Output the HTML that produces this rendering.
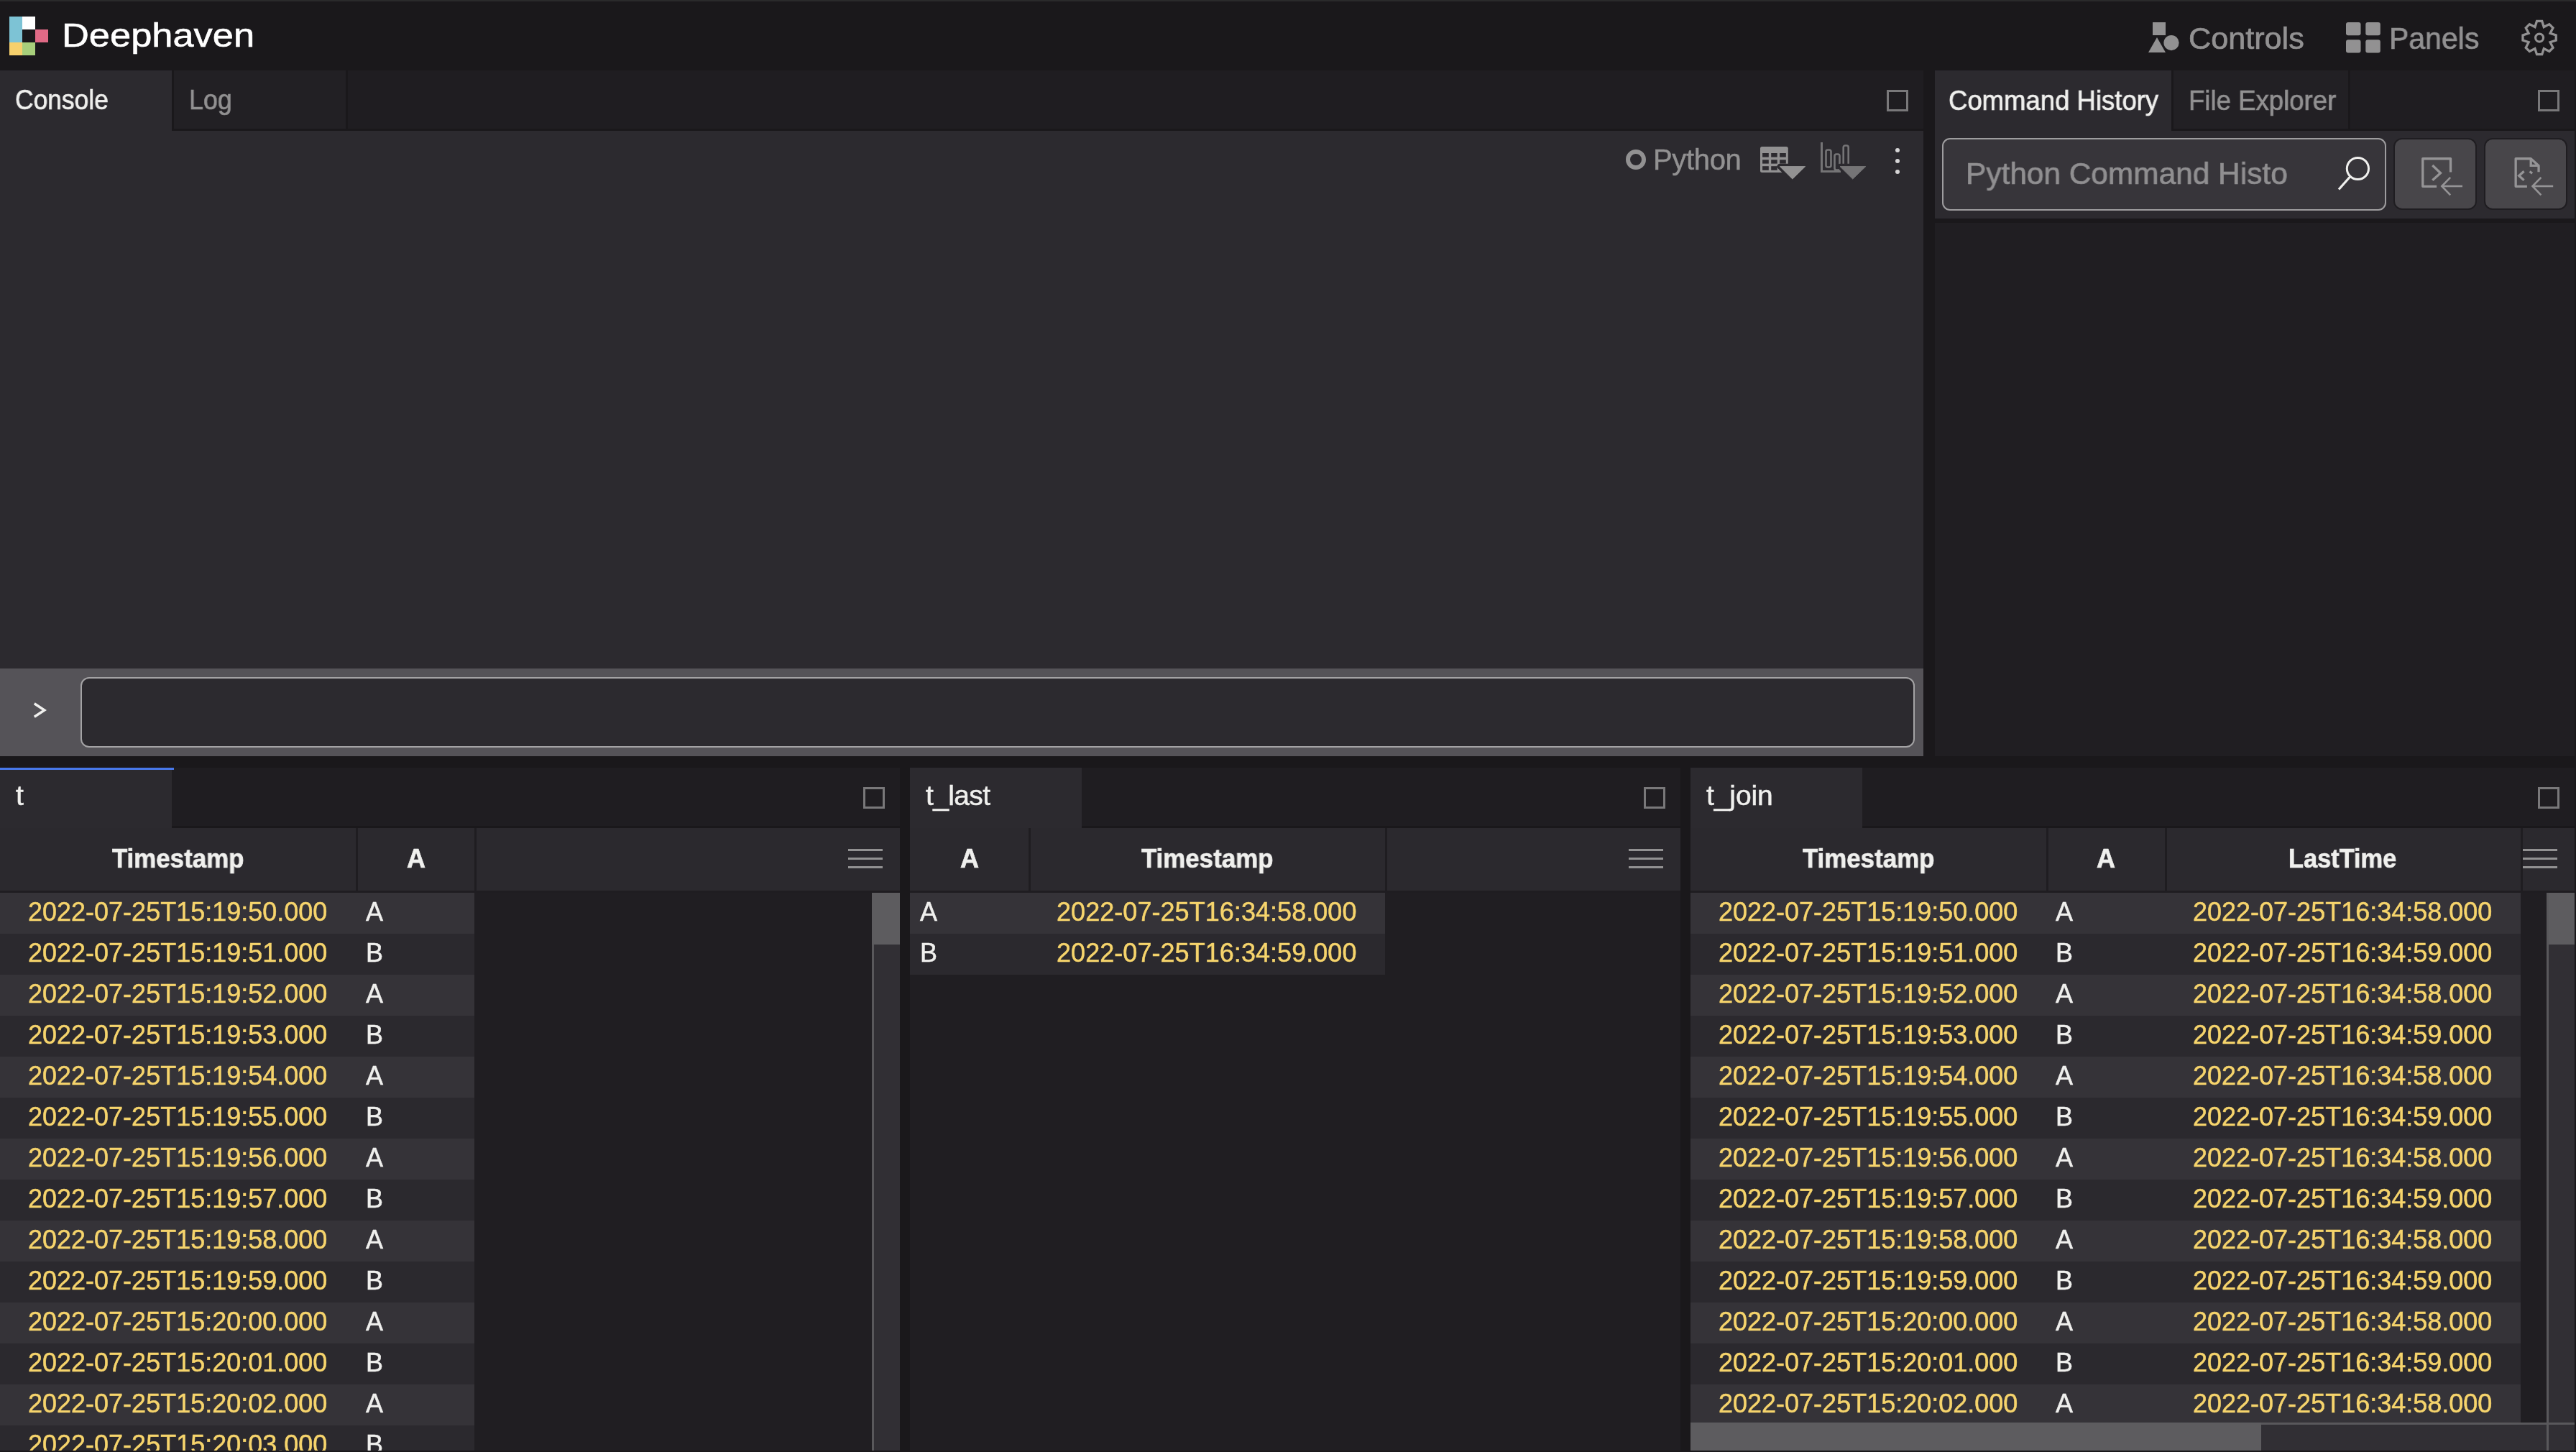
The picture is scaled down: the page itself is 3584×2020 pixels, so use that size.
<!DOCTYPE html>
<html><head><meta charset="utf-8"><title>Deephaven</title><style>
html,body{margin:0;padding:0;width:3584px;height:2020px;overflow:hidden;background:#1a181b;font-family:"Liberation Sans",sans-serif;}
.a{position:absolute;box-sizing:border-box;}
.t{position:absolute;white-space:pre;line-height:1;will-change:transform;}
svg{position:absolute;overflow:visible;}
</style></head><body>
<div class="a" style="left:0px;top:0px;width:3584px;height:2px;background:#2a2a2b;"></div>
<div class="a" style="left:0px;top:2px;width:3584px;height:96px;background:#1a181b;"></div>
<div class="a" style="left:13px;top:23px;width:18px;height:36px;background:#7dc3d5;"></div>
<div class="a" style="left:31px;top:23px;width:18px;height:18px;background:#ffffff;"></div>
<div class="a" style="left:49px;top:41px;width:18px;height:18px;background:#e06a86;"></div>
<div class="a" style="left:13px;top:59px;width:18px;height:18px;background:#f6d06c;"></div>
<div class="a" style="left:31px;top:59px;width:18px;height:18px;background:#a7cf7b;"></div>
<div class="t" style="left:85.5px;top:25.1px;font-size:47px;color:#ffffff;font-weight:400;transform:scaleX(1.1150);transform-origin:0 0;-webkit-text-stroke:0.6px #ffffff;">Deephaven</div>
<svg style="left:2989px;top:31px" width="44" height="43" viewBox="0 0 44 43"><rect x="6" y="0" width="18" height="18" fill="#929192"/><polygon points="0,42 12,21 24,42" fill="#929192"/><circle cx="32" cy="28.6" r="10.6" fill="#929192"/></svg>
<div class="t" style="left:3044.6px;top:32.5px;font-size:42px;color:#929192;font-weight:400;transform:scaleX(1.0280);transform-origin:0 0;-webkit-text-stroke:0.7px currentColor;">Controls</div>
<svg style="left:3264px;top:30.6px" width="48" height="43" viewBox="0 0 48 43"><rect x="0" y="0" width="20.5" height="18.2" rx="3" fill="#929192"/><rect x="27.3" y="0" width="20.5" height="18.2" rx="3" fill="#929192"/><rect x="0" y="24.2" width="20.5" height="18.2" rx="3" fill="#929192"/><rect x="27.3" y="24.2" width="20.5" height="18.2" rx="3" fill="#929192"/></svg>
<div class="t" style="left:3324.1px;top:32.5px;font-size:42px;color:#929192;font-weight:400;transform:scaleX(0.9760);transform-origin:0 0;-webkit-text-stroke:0.7px currentColor;">Panels</div>
<svg style="left:3508px;top:27.4px" width="51" height="51" viewBox="0 0 51 51"><polygon points="21.49,2.43 28.71,2.43 31.30,10.58 38.89,6.65 44.00,11.76 40.07,19.35 48.22,21.94 48.22,29.16 40.07,31.75 44.00,39.34 38.89,44.45 31.30,40.52 28.71,48.67 21.49,48.67 18.90,40.52 11.31,44.45 6.20,39.34 10.13,31.75 1.98,29.16 1.98,21.94 10.13,19.35 6.20,11.76 11.31,6.65 18.90,10.58" fill="none" stroke="#929192" stroke-width="3.3" stroke-linejoin="miter" stroke-miterlimit="10"/><circle cx="25.1" cy="25.55" r="5.5" fill="none" stroke="#929192" stroke-width="3.2"/></svg>
<div class="a" style="left:0px;top:98px;width:2676px;height:84px;background:#1f1d21;"></div>
<div class="a" style="left:0px;top:179px;width:2676px;height:3px;background:#1a181b;"></div>
<div class="a" style="left:0px;top:98px;width:239px;height:84px;background:#2c2a2f;"></div>
<div class="a" style="left:239px;top:98px;width:245px;height:84px;background:#1a181b;"></div>
<div class="a" style="left:242px;top:98px;width:239px;height:81px;background:#222024;"></div>
<div class="t" style="left:20.6px;top:119.3px;font-size:39px;color:#f0f0ee;font-weight:400;transform:scaleX(0.9070);transform-origin:0 0;-webkit-text-stroke:0.7px currentColor;">Console</div>
<div class="t" style="left:262.7px;top:119.3px;font-size:39px;color:#929192;font-weight:400;transform:scaleX(0.9170);transform-origin:0 0;-webkit-text-stroke:0.7px currentColor;">Log</div>
<div class="a" style="left:2625px;top:125px;width:30px;height:30px;border:3px solid #79787a;"></div>
<div class="a" style="left:0px;top:182px;width:2676px;height:748px;background:#2c2a2f;"></div>
<div class="a" style="left:2262px;top:208px;width:28.4px;height:28.4px;border-radius:50%;border:6.2px solid #929192;"></div>
<div class="t" style="left:2300.3px;top:202.3px;font-size:40px;color:#929192;font-weight:400;letter-spacing:-0.35px;-webkit-text-stroke:0.5px currentColor;">Python</div>
<svg style="left:2449px;top:204px" width="64" height="46" viewBox="0 0 64 46">
<rect x="0" y="0" width="38.8" height="36" rx="2.5" fill="#929192"/>
<g fill="#2c2a2f">
<rect x="3.1" y="9" width="8.7" height="5.6"/><rect x="15.2" y="9" width="8.5" height="5.6"/><rect x="27.1" y="9" width="8.7" height="5.6"/>
<rect x="3.1" y="18.3" width="8.7" height="5.3"/><rect x="15.2" y="18.3" width="8.5" height="5.3"/><rect x="27.1" y="18.3" width="8.7" height="5.3"/>
<rect x="3.1" y="27.2" width="8.7" height="5.6"/><rect x="15.2" y="27.2" width="8.5" height="5.6"/><rect x="27.1" y="27.2" width="8.7" height="5.6"/>
</g>
<polygon points="27.3,27.6 62.7,27.6 44.8,45" fill="#2c2a2f" stroke="#2c2a2f" stroke-width="7.5" stroke-linejoin="round"/>
<polygon points="27.3,27.6 62.7,27.6 44.8,45" fill="#929192" stroke="#929192" stroke-width="1" stroke-linejoin="round"/>
</svg>
<svg style="left:2533px;top:198px" width="64" height="52" viewBox="0 0 64 52">
<rect x="0" y="0" width="3" height="42" fill="#757476"/><rect x="0" y="39" width="28" height="3" fill="#757476"/>
<rect x="7.5" y="10.5" width="7" height="24" rx="2.5" fill="none" stroke="#757476" stroke-width="2.6"/>
<rect x="19.5" y="16.5" width="7" height="22" rx="2.5" fill="none" stroke="#757476" stroke-width="2.6"/>
<rect x="31.7" y="4.5" width="7" height="30" rx="2.5" fill="none" stroke="#757476" stroke-width="2.6"/>
<polygon points="27,33.6 62.8,33.6 44.7,51" fill="#2c2a2f" stroke="#2c2a2f" stroke-width="7.5" stroke-linejoin="round"/>
<polygon points="27,33.6 62.8,33.6 44.7,51" fill="#757476" stroke="#757476" stroke-width="1" stroke-linejoin="round"/>
</svg>
<div class="a" style="left:2637px;top:206px;width:6.4px;height:6.4px;border-radius:50%;background:#d6d5d6;"></div>
<div class="a" style="left:2637px;top:221px;width:6.4px;height:6.4px;border-radius:50%;background:#d6d5d6;"></div>
<div class="a" style="left:2637px;top:236px;width:6.4px;height:6.4px;border-radius:50%;background:#d6d5d6;"></div>
<div class="a" style="left:0px;top:930px;width:2676px;height:122px;background:#555358;"></div>
<svg style="left:46px;top:977px" width="20" height="24" viewBox="0 0 20 24"><polyline points="1.8,1.8 15.8,11 1.8,20.2" fill="none" stroke="#f0f0ee" stroke-width="3.5"/></svg>
<div class="a" style="left:112px;top:942px;width:2552px;height:98px;border:2px solid #a4a3a5;border-radius:12px;background:#2c2a2f;"></div>
<div class="a" style="left:2692px;top:98px;width:890px;height:84px;background:#1f1d21;"></div>
<div class="a" style="left:2692px;top:179px;width:890px;height:3px;background:#1a181b;"></div>
<div class="a" style="left:2692px;top:98px;width:329px;height:84px;background:#2c2a2f;"></div>
<div class="a" style="left:3021px;top:98px;width:249px;height:84px;background:#1a181b;"></div>
<div class="a" style="left:3024px;top:98px;width:243px;height:81px;background:#222024;"></div>
<div class="t" style="left:2710.9px;top:119.5px;font-size:39px;color:#f0f0ee;font-weight:400;transform:scaleX(0.9360);transform-origin:0 0;-webkit-text-stroke:0.7px currentColor;">Command History</div>
<div class="t" style="left:3044.7px;top:119.5px;font-size:39px;color:#929192;font-weight:400;transform:scaleX(0.9375);transform-origin:0 0;-webkit-text-stroke:0.7px currentColor;">File Explorer</div>
<div class="a" style="left:3531px;top:125px;width:30px;height:30px;border:3px solid #79787a;"></div>
<div class="a" style="left:2692px;top:182px;width:890px;height:122px;background:#2c2a2f;"></div>
<div class="a" style="left:2692px;top:304px;width:890px;height:6px;background:#1a181b;"></div>
<div class="a" style="left:2692px;top:310px;width:890px;height:742px;background:#201e22;"></div>
<div class="a" style="left:3582px;top:98px;width:2px;height:954px;background:#1a181b;"></div>
<div class="a" style="left:2702px;top:192px;width:618px;height:101px;border:2px solid #9e9d9f;border-radius:11px;background:#37353a;"></div>
<div class="t" style="left:2735.0px;top:219.8px;font-size:43px;color:#908f91;font-weight:400;transform:scaleX(0.9860);transform-origin:0 0;-webkit-text-stroke:0.7px currentColor;">Python Command Histo</div>
<svg style="left:3250px;top:215px" width="50" height="52" viewBox="0 0 50 52"><circle cx="30.4" cy="19.5" r="15.1" fill="none" stroke="#f0f0ee" stroke-width="3"/><line x1="19.5" y1="31" x2="4" y2="48.5" stroke="#f0f0ee" stroke-width="3.2"/></svg>
<div class="a" style="left:3330px;top:192px;width:116px;height:100px;border:2px solid #1f1d21;border-radius:12px;background:#48464a;"></div>
<div class="a" style="left:3456px;top:192px;width:116px;height:100px;border:2px solid #1f1d21;border-radius:12px;background:#48464a;"></div>
<svg style="left:3360px;top:210px" width="80" height="70" viewBox="0 0 80 70">
<path d="M30.1,49.35 L10.75,49.35 L10.75,10.75 L49.55,10.75 L49.55,29.6" fill="none" stroke="#959496" stroke-width="3.3" stroke-linejoin="round"/>
<polyline points="24.3,20 35.5,30.7 24.3,40.8" fill="none" stroke="#959496" stroke-width="3.3"/>
<line x1="37.5" y1="49" x2="66" y2="49" stroke="#959496" stroke-width="2.6"/>
<polyline points="49.2,36.9 37.3,49 49.2,61.3" fill="none" stroke="#959496" stroke-width="2.6"/>
</svg>
<svg style="left:3486px;top:210px" width="80" height="70" viewBox="0 0 80 70">
<path d="M29.9,49.35 L14.15,49.35 L14.15,10.75 L35.2,10.75 L46.05,20.4 L46.05,29.3" fill="none" stroke="#959496" stroke-width="3.3" stroke-linejoin="round"/>
<polyline points="35.2,10.75 35.2,20.4 46.05,20.4" fill="none" stroke="#959496" stroke-width="3.3"/>
<polyline points="25.6,28.3 18.7,34.6 25.6,40.8" fill="none" stroke="#959496" stroke-width="3.3"/>
<line x1="33.6" y1="28.5" x2="37.1" y2="31.2" stroke="#959496" stroke-width="3.3"/>
<line x1="37.5" y1="49" x2="66.2" y2="49" stroke="#959496" stroke-width="2.6"/>
<polyline points="49.4,36.9 37.5,49 49.4,61.3" fill="none" stroke="#959496" stroke-width="2.6"/>
</svg>
<div class="a" style="left:0px;top:1068px;width:1252px;height:84px;background:#1f1d21;"></div>
<div class="a" style="left:0px;top:1149px;width:1252px;height:3px;background:#1a181b;"></div>
<div class="a" style="left:0px;top:1068px;width:239px;height:84px;background:#2c2a2f;"></div>
<div class="a" style="left:0px;top:1068px;width:242px;height:3px;background:#4878ea;"></div>
<div class="t" style="left:22.0px;top:1087.4px;font-size:39px;color:#f0f0ee;font-weight:400;letter-spacing:-0.3px;-webkit-text-stroke:0.5px currentColor;">t</div>
<div class="a" style="left:1201px;top:1095px;width:30px;height:30px;border:3px solid #79787a;"></div>
<div class="a" style="left:0px;top:1152px;width:1252px;height:87px;background:#2b292e;"></div>
<div class="a" style="left:0px;top:1239px;width:1252px;height:3px;background:#1f1d21;"></div>
<div class="a" style="left:0px;top:1242px;width:1252px;height:776px;background:#201e22;"></div>
<div class="a" style="left:495px;top:1152px;width:3px;height:87px;background:#1f1d21;"></div>
<div class="a" style="left:660px;top:1152px;width:3px;height:87px;background:#1f1d21;"></div>
<div class="a" style="left:0px;top:1242px;width:660px;height:57px;background:#353338;"></div>
<div class="a" style="left:0px;top:1299px;width:660px;height:57px;background:#2b292e;"></div>
<div class="a" style="left:0px;top:1356px;width:660px;height:57px;background:#353338;"></div>
<div class="a" style="left:0px;top:1413px;width:660px;height:57px;background:#2b292e;"></div>
<div class="a" style="left:0px;top:1470px;width:660px;height:57px;background:#353338;"></div>
<div class="a" style="left:0px;top:1527px;width:660px;height:57px;background:#2b292e;"></div>
<div class="a" style="left:0px;top:1584px;width:660px;height:57px;background:#353338;"></div>
<div class="a" style="left:0px;top:1641px;width:660px;height:57px;background:#2b292e;"></div>
<div class="a" style="left:0px;top:1698px;width:660px;height:57px;background:#353338;"></div>
<div class="a" style="left:0px;top:1755px;width:660px;height:57px;background:#2b292e;"></div>
<div class="a" style="left:0px;top:1812px;width:660px;height:57px;background:#353338;"></div>
<div class="a" style="left:0px;top:1869px;width:660px;height:57px;background:#2b292e;"></div>
<div class="a" style="left:0px;top:1926px;width:660px;height:57px;background:#353338;"></div>
<div class="a" style="left:0px;top:1983px;width:660px;height:35px;background:#2b292e;"></div>
<div class="t" style="left:156.3px;top:1177.1px;font-size:36px;color:#f0f0ee;font-weight:700;transform:scaleX(0.9680);transform-origin:0 0;-webkit-text-stroke:0.7px currentColor;">Timestamp</div>
<div class="t" style="left:565.5px;top:1177.1px;font-size:36px;color:#f0f0ee;font-weight:700;letter-spacing:0px;-webkit-text-stroke:0.7px currentColor;">A</div>
<div class="t" style="left:38.5px;top:1250.8px;font-size:36px;color:#f6d46c;font-weight:400;letter-spacing:0.0px;-webkit-text-stroke:0.5px currentColor;">2022-07-25T15:19:50.000</div>
<div class="t" style="left:509.0px;top:1250.8px;font-size:36px;color:#f0f0ee;font-weight:400;letter-spacing:0px;-webkit-text-stroke:0.5px currentColor;">A</div>
<div class="t" style="left:38.5px;top:1307.8px;font-size:36px;color:#f6d46c;font-weight:400;letter-spacing:0.0px;-webkit-text-stroke:0.5px currentColor;">2022-07-25T15:19:51.000</div>
<div class="t" style="left:509.0px;top:1307.8px;font-size:36px;color:#f0f0ee;font-weight:400;letter-spacing:0px;-webkit-text-stroke:0.5px currentColor;">B</div>
<div class="t" style="left:38.5px;top:1364.8px;font-size:36px;color:#f6d46c;font-weight:400;letter-spacing:0.0px;-webkit-text-stroke:0.5px currentColor;">2022-07-25T15:19:52.000</div>
<div class="t" style="left:509.0px;top:1364.8px;font-size:36px;color:#f0f0ee;font-weight:400;letter-spacing:0px;-webkit-text-stroke:0.5px currentColor;">A</div>
<div class="t" style="left:38.5px;top:1421.8px;font-size:36px;color:#f6d46c;font-weight:400;letter-spacing:0.0px;-webkit-text-stroke:0.5px currentColor;">2022-07-25T15:19:53.000</div>
<div class="t" style="left:509.0px;top:1421.8px;font-size:36px;color:#f0f0ee;font-weight:400;letter-spacing:0px;-webkit-text-stroke:0.5px currentColor;">B</div>
<div class="t" style="left:38.5px;top:1478.8px;font-size:36px;color:#f6d46c;font-weight:400;letter-spacing:0.0px;-webkit-text-stroke:0.5px currentColor;">2022-07-25T15:19:54.000</div>
<div class="t" style="left:509.0px;top:1478.8px;font-size:36px;color:#f0f0ee;font-weight:400;letter-spacing:0px;-webkit-text-stroke:0.5px currentColor;">A</div>
<div class="t" style="left:38.5px;top:1535.8px;font-size:36px;color:#f6d46c;font-weight:400;letter-spacing:0.0px;-webkit-text-stroke:0.5px currentColor;">2022-07-25T15:19:55.000</div>
<div class="t" style="left:509.0px;top:1535.8px;font-size:36px;color:#f0f0ee;font-weight:400;letter-spacing:0px;-webkit-text-stroke:0.5px currentColor;">B</div>
<div class="t" style="left:38.5px;top:1592.8px;font-size:36px;color:#f6d46c;font-weight:400;letter-spacing:0.0px;-webkit-text-stroke:0.5px currentColor;">2022-07-25T15:19:56.000</div>
<div class="t" style="left:509.0px;top:1592.8px;font-size:36px;color:#f0f0ee;font-weight:400;letter-spacing:0px;-webkit-text-stroke:0.5px currentColor;">A</div>
<div class="t" style="left:38.5px;top:1649.8px;font-size:36px;color:#f6d46c;font-weight:400;letter-spacing:0.0px;-webkit-text-stroke:0.5px currentColor;">2022-07-25T15:19:57.000</div>
<div class="t" style="left:509.0px;top:1649.8px;font-size:36px;color:#f0f0ee;font-weight:400;letter-spacing:0px;-webkit-text-stroke:0.5px currentColor;">B</div>
<div class="t" style="left:38.5px;top:1706.8px;font-size:36px;color:#f6d46c;font-weight:400;letter-spacing:0.0px;-webkit-text-stroke:0.5px currentColor;">2022-07-25T15:19:58.000</div>
<div class="t" style="left:509.0px;top:1706.8px;font-size:36px;color:#f0f0ee;font-weight:400;letter-spacing:0px;-webkit-text-stroke:0.5px currentColor;">A</div>
<div class="t" style="left:38.5px;top:1763.8px;font-size:36px;color:#f6d46c;font-weight:400;letter-spacing:0.0px;-webkit-text-stroke:0.5px currentColor;">2022-07-25T15:19:59.000</div>
<div class="t" style="left:509.0px;top:1763.8px;font-size:36px;color:#f0f0ee;font-weight:400;letter-spacing:0px;-webkit-text-stroke:0.5px currentColor;">B</div>
<div class="t" style="left:38.5px;top:1820.8px;font-size:36px;color:#f6d46c;font-weight:400;letter-spacing:0.0px;-webkit-text-stroke:0.5px currentColor;">2022-07-25T15:20:00.000</div>
<div class="t" style="left:509.0px;top:1820.8px;font-size:36px;color:#f0f0ee;font-weight:400;letter-spacing:0px;-webkit-text-stroke:0.5px currentColor;">A</div>
<div class="t" style="left:38.5px;top:1877.8px;font-size:36px;color:#f6d46c;font-weight:400;letter-spacing:0.0px;-webkit-text-stroke:0.5px currentColor;">2022-07-25T15:20:01.000</div>
<div class="t" style="left:509.0px;top:1877.8px;font-size:36px;color:#f0f0ee;font-weight:400;letter-spacing:0px;-webkit-text-stroke:0.5px currentColor;">B</div>
<div class="t" style="left:38.5px;top:1934.8px;font-size:36px;color:#f6d46c;font-weight:400;letter-spacing:0.0px;-webkit-text-stroke:0.5px currentColor;">2022-07-25T15:20:02.000</div>
<div class="t" style="left:509.0px;top:1934.8px;font-size:36px;color:#f0f0ee;font-weight:400;letter-spacing:0px;-webkit-text-stroke:0.5px currentColor;">A</div>
<div class="t" style="left:38.5px;top:1991.8px;font-size:36px;color:#f6d46c;font-weight:400;letter-spacing:0.0px;-webkit-text-stroke:0.5px currentColor;">2022-07-25T15:20:03.000</div>
<div class="t" style="left:509.0px;top:1991.8px;font-size:36px;color:#f0f0ee;font-weight:400;letter-spacing:0px;-webkit-text-stroke:0.5px currentColor;">B</div>
<div class="a" style="left:1213px;top:1242px;width:39px;height:776px;background:#312f34;"></div>
<div class="a" style="left:1213px;top:1242px;width:3px;height:776px;background:#59585b;"></div>
<div class="a" style="left:1213px;top:1242px;width:39px;height:72px;background:#5d5c5f;"></div>
<div class="a" style="left:1180px;top:1181px;width:48px;height:3px;background:#929192;"></div>
<div class="a" style="left:1180px;top:1193px;width:48px;height:3px;background:#929192;"></div>
<div class="a" style="left:1180px;top:1205px;width:48px;height:3px;background:#929192;"></div>
<div class="a" style="left:1266px;top:1068px;width:1072px;height:84px;background:#1f1d21;"></div>
<div class="a" style="left:1266px;top:1149px;width:1072px;height:3px;background:#1a181b;"></div>
<div class="a" style="left:1266px;top:1068px;width:239px;height:84px;background:#2c2a2f;"></div>
<div class="t" style="left:1287.5px;top:1087.4px;font-size:39px;color:#f0f0ee;font-weight:400;letter-spacing:-0.65px;-webkit-text-stroke:0.5px currentColor;">t_last</div>
<div class="a" style="left:2287px;top:1095px;width:30px;height:30px;border:3px solid #79787a;"></div>
<div class="a" style="left:1266px;top:1152px;width:1072px;height:87px;background:#2b292e;"></div>
<div class="a" style="left:1266px;top:1239px;width:1072px;height:3px;background:#1f1d21;"></div>
<div class="a" style="left:1266px;top:1242px;width:1072px;height:776px;background:#201e22;"></div>
<div class="a" style="left:1430.5px;top:1152px;width:3.0px;height:87px;background:#1f1d21;"></div>
<div class="a" style="left:1927.2px;top:1152px;width:3.0px;height:87px;background:#1f1d21;"></div>
<div class="a" style="left:1266px;top:1242px;width:661.2px;height:57px;background:#353338;"></div>
<div class="a" style="left:1266px;top:1299px;width:661.2px;height:57px;background:#2b292e;"></div>
<div class="t" style="left:1335.5px;top:1177.1px;font-size:36px;color:#f0f0ee;font-weight:700;letter-spacing:0px;-webkit-text-stroke:0.7px currentColor;">A</div>
<div class="t" style="left:1587.7px;top:1177.1px;font-size:36px;color:#f0f0ee;font-weight:700;transform:scaleX(0.9680);transform-origin:0 0;-webkit-text-stroke:0.7px currentColor;">Timestamp</div>
<div class="t" style="left:1279.5px;top:1250.8px;font-size:36px;color:#f0f0ee;font-weight:400;letter-spacing:0px;-webkit-text-stroke:0.5px currentColor;">A</div>
<div class="t" style="left:1469.5px;top:1250.8px;font-size:36px;color:#f6d46c;font-weight:400;letter-spacing:0.05px;-webkit-text-stroke:0.5px currentColor;">2022-07-25T16:34:58.000</div>
<div class="t" style="left:1279.5px;top:1307.8px;font-size:36px;color:#f0f0ee;font-weight:400;letter-spacing:0px;-webkit-text-stroke:0.5px currentColor;">B</div>
<div class="t" style="left:1469.5px;top:1307.8px;font-size:36px;color:#f6d46c;font-weight:400;letter-spacing:0.05px;-webkit-text-stroke:0.5px currentColor;">2022-07-25T16:34:59.000</div>
<div class="a" style="left:2266px;top:1181px;width:48px;height:3px;background:#929192;"></div>
<div class="a" style="left:2266px;top:1193px;width:48px;height:3px;background:#929192;"></div>
<div class="a" style="left:2266px;top:1205px;width:48px;height:3px;background:#929192;"></div>
<div class="a" style="left:2352px;top:1068px;width:1230px;height:84px;background:#1f1d21;"></div>
<div class="a" style="left:2352px;top:1149px;width:1230px;height:3px;background:#1a181b;"></div>
<div class="a" style="left:2352px;top:1068px;width:239px;height:84px;background:#2c2a2f;"></div>
<div class="t" style="left:2373.5px;top:1087.4px;font-size:39px;color:#f0f0ee;font-weight:400;letter-spacing:-0.1px;-webkit-text-stroke:0.5px currentColor;">t_join</div>
<div class="a" style="left:3531px;top:1095px;width:30px;height:30px;border:3px solid #79787a;"></div>
<div class="a" style="left:2352px;top:1152px;width:1230px;height:87px;background:#2b292e;"></div>
<div class="a" style="left:2352px;top:1239px;width:1230px;height:3px;background:#1f1d21;"></div>
<div class="a" style="left:2352px;top:1242px;width:1230px;height:776px;background:#201e22;"></div>
<div class="a" style="left:2847px;top:1152px;width:3px;height:87px;background:#1f1d21;"></div>
<div class="a" style="left:3012px;top:1152px;width:3px;height:87px;background:#1f1d21;"></div>
<div class="a" style="left:3507.3px;top:1152px;width:3.0px;height:87px;background:#1f1d21;"></div>
<div class="a" style="left:2352px;top:1242px;width:1155.3000000000002px;height:57px;background:#353338;"></div>
<div class="a" style="left:2352px;top:1299px;width:1155.3000000000002px;height:57px;background:#2b292e;"></div>
<div class="a" style="left:2352px;top:1356px;width:1155.3000000000002px;height:57px;background:#353338;"></div>
<div class="a" style="left:2352px;top:1413px;width:1155.3000000000002px;height:57px;background:#2b292e;"></div>
<div class="a" style="left:2352px;top:1470px;width:1155.3000000000002px;height:57px;background:#353338;"></div>
<div class="a" style="left:2352px;top:1527px;width:1155.3000000000002px;height:57px;background:#2b292e;"></div>
<div class="a" style="left:2352px;top:1584px;width:1155.3000000000002px;height:57px;background:#353338;"></div>
<div class="a" style="left:2352px;top:1641px;width:1155.3000000000002px;height:57px;background:#2b292e;"></div>
<div class="a" style="left:2352px;top:1698px;width:1155.3000000000002px;height:57px;background:#353338;"></div>
<div class="a" style="left:2352px;top:1755px;width:1155.3000000000002px;height:57px;background:#2b292e;"></div>
<div class="a" style="left:2352px;top:1812px;width:1155.3000000000002px;height:57px;background:#353338;"></div>
<div class="a" style="left:2352px;top:1869px;width:1155.3000000000002px;height:57px;background:#2b292e;"></div>
<div class="a" style="left:2352px;top:1926px;width:1155.3000000000002px;height:57px;background:#353338;"></div>
<div class="a" style="left:2352px;top:1983px;width:1155.3000000000002px;height:35px;background:#2b292e;"></div>
<div class="t" style="left:2508.2px;top:1177.1px;font-size:36px;color:#f0f0ee;font-weight:700;transform:scaleX(0.9680);transform-origin:0 0;-webkit-text-stroke:0.7px currentColor;">Timestamp</div>
<div class="t" style="left:2916.5px;top:1177.1px;font-size:36px;color:#f0f0ee;font-weight:700;letter-spacing:0px;-webkit-text-stroke:0.7px currentColor;">A</div>
<div class="t" style="left:3184.3px;top:1177.1px;font-size:36px;color:#f0f0ee;font-weight:700;transform:scaleX(0.9550);transform-origin:0 0;-webkit-text-stroke:0.7px currentColor;">LastTime</div>
<div class="t" style="left:2390.5px;top:1250.8px;font-size:36px;color:#f6d46c;font-weight:400;letter-spacing:0.0px;-webkit-text-stroke:0.5px currentColor;">2022-07-25T15:19:50.000</div>
<div class="t" style="left:2860.0px;top:1250.8px;font-size:36px;color:#f0f0ee;font-weight:400;letter-spacing:0px;-webkit-text-stroke:0.5px currentColor;">A</div>
<div class="t" style="left:3050.5px;top:1250.8px;font-size:36px;color:#f6d46c;font-weight:400;letter-spacing:0.0px;-webkit-text-stroke:0.5px currentColor;">2022-07-25T16:34:58.000</div>
<div class="t" style="left:2390.5px;top:1307.8px;font-size:36px;color:#f6d46c;font-weight:400;letter-spacing:0.0px;-webkit-text-stroke:0.5px currentColor;">2022-07-25T15:19:51.000</div>
<div class="t" style="left:2860.0px;top:1307.8px;font-size:36px;color:#f0f0ee;font-weight:400;letter-spacing:0px;-webkit-text-stroke:0.5px currentColor;">B</div>
<div class="t" style="left:3050.5px;top:1307.8px;font-size:36px;color:#f6d46c;font-weight:400;letter-spacing:0.0px;-webkit-text-stroke:0.5px currentColor;">2022-07-25T16:34:59.000</div>
<div class="t" style="left:2390.5px;top:1364.8px;font-size:36px;color:#f6d46c;font-weight:400;letter-spacing:0.0px;-webkit-text-stroke:0.5px currentColor;">2022-07-25T15:19:52.000</div>
<div class="t" style="left:2860.0px;top:1364.8px;font-size:36px;color:#f0f0ee;font-weight:400;letter-spacing:0px;-webkit-text-stroke:0.5px currentColor;">A</div>
<div class="t" style="left:3050.5px;top:1364.8px;font-size:36px;color:#f6d46c;font-weight:400;letter-spacing:0.0px;-webkit-text-stroke:0.5px currentColor;">2022-07-25T16:34:58.000</div>
<div class="t" style="left:2390.5px;top:1421.8px;font-size:36px;color:#f6d46c;font-weight:400;letter-spacing:0.0px;-webkit-text-stroke:0.5px currentColor;">2022-07-25T15:19:53.000</div>
<div class="t" style="left:2860.0px;top:1421.8px;font-size:36px;color:#f0f0ee;font-weight:400;letter-spacing:0px;-webkit-text-stroke:0.5px currentColor;">B</div>
<div class="t" style="left:3050.5px;top:1421.8px;font-size:36px;color:#f6d46c;font-weight:400;letter-spacing:0.0px;-webkit-text-stroke:0.5px currentColor;">2022-07-25T16:34:59.000</div>
<div class="t" style="left:2390.5px;top:1478.8px;font-size:36px;color:#f6d46c;font-weight:400;letter-spacing:0.0px;-webkit-text-stroke:0.5px currentColor;">2022-07-25T15:19:54.000</div>
<div class="t" style="left:2860.0px;top:1478.8px;font-size:36px;color:#f0f0ee;font-weight:400;letter-spacing:0px;-webkit-text-stroke:0.5px currentColor;">A</div>
<div class="t" style="left:3050.5px;top:1478.8px;font-size:36px;color:#f6d46c;font-weight:400;letter-spacing:0.0px;-webkit-text-stroke:0.5px currentColor;">2022-07-25T16:34:58.000</div>
<div class="t" style="left:2390.5px;top:1535.8px;font-size:36px;color:#f6d46c;font-weight:400;letter-spacing:0.0px;-webkit-text-stroke:0.5px currentColor;">2022-07-25T15:19:55.000</div>
<div class="t" style="left:2860.0px;top:1535.8px;font-size:36px;color:#f0f0ee;font-weight:400;letter-spacing:0px;-webkit-text-stroke:0.5px currentColor;">B</div>
<div class="t" style="left:3050.5px;top:1535.8px;font-size:36px;color:#f6d46c;font-weight:400;letter-spacing:0.0px;-webkit-text-stroke:0.5px currentColor;">2022-07-25T16:34:59.000</div>
<div class="t" style="left:2390.5px;top:1592.8px;font-size:36px;color:#f6d46c;font-weight:400;letter-spacing:0.0px;-webkit-text-stroke:0.5px currentColor;">2022-07-25T15:19:56.000</div>
<div class="t" style="left:2860.0px;top:1592.8px;font-size:36px;color:#f0f0ee;font-weight:400;letter-spacing:0px;-webkit-text-stroke:0.5px currentColor;">A</div>
<div class="t" style="left:3050.5px;top:1592.8px;font-size:36px;color:#f6d46c;font-weight:400;letter-spacing:0.0px;-webkit-text-stroke:0.5px currentColor;">2022-07-25T16:34:58.000</div>
<div class="t" style="left:2390.5px;top:1649.8px;font-size:36px;color:#f6d46c;font-weight:400;letter-spacing:0.0px;-webkit-text-stroke:0.5px currentColor;">2022-07-25T15:19:57.000</div>
<div class="t" style="left:2860.0px;top:1649.8px;font-size:36px;color:#f0f0ee;font-weight:400;letter-spacing:0px;-webkit-text-stroke:0.5px currentColor;">B</div>
<div class="t" style="left:3050.5px;top:1649.8px;font-size:36px;color:#f6d46c;font-weight:400;letter-spacing:0.0px;-webkit-text-stroke:0.5px currentColor;">2022-07-25T16:34:59.000</div>
<div class="t" style="left:2390.5px;top:1706.8px;font-size:36px;color:#f6d46c;font-weight:400;letter-spacing:0.0px;-webkit-text-stroke:0.5px currentColor;">2022-07-25T15:19:58.000</div>
<div class="t" style="left:2860.0px;top:1706.8px;font-size:36px;color:#f0f0ee;font-weight:400;letter-spacing:0px;-webkit-text-stroke:0.5px currentColor;">A</div>
<div class="t" style="left:3050.5px;top:1706.8px;font-size:36px;color:#f6d46c;font-weight:400;letter-spacing:0.0px;-webkit-text-stroke:0.5px currentColor;">2022-07-25T16:34:58.000</div>
<div class="t" style="left:2390.5px;top:1763.8px;font-size:36px;color:#f6d46c;font-weight:400;letter-spacing:0.0px;-webkit-text-stroke:0.5px currentColor;">2022-07-25T15:19:59.000</div>
<div class="t" style="left:2860.0px;top:1763.8px;font-size:36px;color:#f0f0ee;font-weight:400;letter-spacing:0px;-webkit-text-stroke:0.5px currentColor;">B</div>
<div class="t" style="left:3050.5px;top:1763.8px;font-size:36px;color:#f6d46c;font-weight:400;letter-spacing:0.0px;-webkit-text-stroke:0.5px currentColor;">2022-07-25T16:34:59.000</div>
<div class="t" style="left:2390.5px;top:1820.8px;font-size:36px;color:#f6d46c;font-weight:400;letter-spacing:0.0px;-webkit-text-stroke:0.5px currentColor;">2022-07-25T15:20:00.000</div>
<div class="t" style="left:2860.0px;top:1820.8px;font-size:36px;color:#f0f0ee;font-weight:400;letter-spacing:0px;-webkit-text-stroke:0.5px currentColor;">A</div>
<div class="t" style="left:3050.5px;top:1820.8px;font-size:36px;color:#f6d46c;font-weight:400;letter-spacing:0.0px;-webkit-text-stroke:0.5px currentColor;">2022-07-25T16:34:58.000</div>
<div class="t" style="left:2390.5px;top:1877.8px;font-size:36px;color:#f6d46c;font-weight:400;letter-spacing:0.0px;-webkit-text-stroke:0.5px currentColor;">2022-07-25T15:20:01.000</div>
<div class="t" style="left:2860.0px;top:1877.8px;font-size:36px;color:#f0f0ee;font-weight:400;letter-spacing:0px;-webkit-text-stroke:0.5px currentColor;">B</div>
<div class="t" style="left:3050.5px;top:1877.8px;font-size:36px;color:#f6d46c;font-weight:400;letter-spacing:0.0px;-webkit-text-stroke:0.5px currentColor;">2022-07-25T16:34:59.000</div>
<div class="t" style="left:2390.5px;top:1934.8px;font-size:36px;color:#f6d46c;font-weight:400;letter-spacing:0.0px;-webkit-text-stroke:0.5px currentColor;">2022-07-25T15:20:02.000</div>
<div class="t" style="left:2860.0px;top:1934.8px;font-size:36px;color:#f0f0ee;font-weight:400;letter-spacing:0px;-webkit-text-stroke:0.5px currentColor;">A</div>
<div class="t" style="left:3050.5px;top:1934.8px;font-size:36px;color:#f6d46c;font-weight:400;letter-spacing:0.0px;-webkit-text-stroke:0.5px currentColor;">2022-07-25T16:34:58.000</div>
<div class="t" style="left:2390.5px;top:1991.8px;font-size:36px;color:#f6d46c;font-weight:400;letter-spacing:0.0px;-webkit-text-stroke:0.5px currentColor;">2022-07-25T15:20:03.000</div>
<div class="t" style="left:2860.0px;top:1991.8px;font-size:36px;color:#f0f0ee;font-weight:400;letter-spacing:0px;-webkit-text-stroke:0.5px currentColor;">B</div>
<div class="t" style="left:3050.5px;top:1991.8px;font-size:36px;color:#f6d46c;font-weight:400;letter-spacing:0.0px;-webkit-text-stroke:0.5px currentColor;">2022-07-25T16:34:59.000</div>
<div class="a" style="left:3543px;top:1242px;width:39px;height:776px;background:#312f34;"></div>
<div class="a" style="left:3543px;top:1242px;width:3px;height:776px;background:#59585b;"></div>
<div class="a" style="left:3543px;top:1242px;width:39px;height:72px;background:#5d5c5f;"></div>
<div class="a" style="left:3510px;top:1181px;width:48px;height:3px;background:#929192;"></div>
<div class="a" style="left:3510px;top:1193px;width:48px;height:3px;background:#929192;"></div>
<div class="a" style="left:3510px;top:1205px;width:48px;height:3px;background:#929192;"></div>
<div class="a" style="left:2352px;top:1979px;width:1230px;height:39px;background:#312f34;"></div>
<div class="a" style="left:2352px;top:1979px;width:1230px;height:3px;background:#59585b;"></div>
<div class="a" style="left:3543px;top:1242px;width:3px;height:776px;background:#59585b;"></div>
<div class="a" style="left:2352px;top:1979px;width:794px;height:39px;background:#5d5c5f;"></div>
<div class="a" style="left:3582px;top:1068px;width:2px;height:952px;background:#1a181b;"></div>
<div class="a" style="left:0px;top:2018px;width:3584px;height:2px;background:#1a181b;"></div>
</body></html>
